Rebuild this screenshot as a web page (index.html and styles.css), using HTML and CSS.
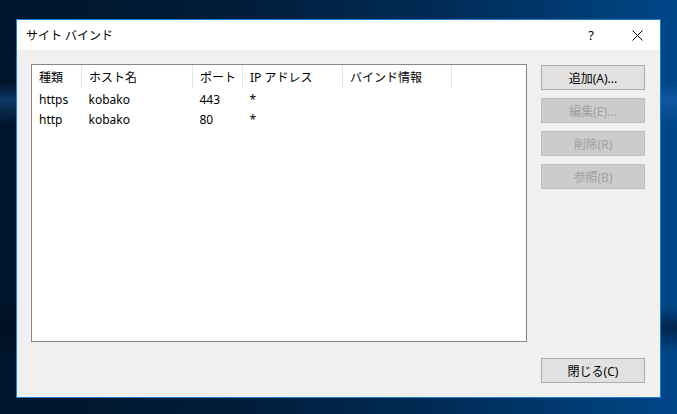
FILE: index.html
```html
<!DOCTYPE html>
<html lang="ja">
<head>
    <meta charset="UTF-8">
    <meta name="viewport" content="width=device-width, initial-scale=1.0">
    <title>サイト バインド</title>
    <link rel="stylesheet" href="styles.css">
</head>
<body>
    <div class="dialog">
        <div class="titlebar">
            <span class="title">サイト バインド</span>
            <div class="caption-buttons">
                <span class="caption-btn help">?</span>
                <span class="caption-btn close">
                    <svg width="11" height="11" viewBox="0 0 11 11">
                        <path d="M0.5 0.5 L10.5 10.5 M10.5 0.5 L0.5 10.5" stroke="#000" stroke-width="1" fill="none"/>
                    </svg>
                </span>
            </div>
        </div>

        <div class="content">
            <div class="listview">
                <table>
                    <thead>
                        <tr>
                            <th class="col-type">種類</th>
                            <th class="col-host">ホスト名</th>
                            <th class="col-port">ポート</th>
                            <th class="col-ip">IP アドレス</th>
                            <th class="col-info">バインド情報</th>
                            <th class="col-rest"></th>
                        </tr>
                    </thead>
                    <tbody>
                        <tr>
                            <td>https</td>
                            <td>kobako</td>
                            <td>443</td>
                            <td>*</td>
                            <td></td>
                            <td></td>
                        </tr>
                        <tr>
                            <td>http</td>
                            <td>kobako</td>
                            <td>80</td>
                            <td>*</td>
                            <td></td>
                            <td></td>
                        </tr>
                    </tbody>
                </table>
            </div>

            <div class="side">
                <button class="btn">追加(A)...</button>
                <button class="btn" disabled>編集(E)...</button>
                <button class="btn" disabled>削除(R)</button>
                <button class="btn" disabled>参照(B)</button>
                <button class="btn btn-close">閉じる(C)</button>
            </div>
        </div>
    </div>
</body>
</html>
```

FILE: styles.css
```css
body {
    margin: 0;
    width: 677px;
    height: 414px;
    overflow: hidden;
    font-family: 'Noto Sans', 'Noto Sans CJK JP', sans-serif;
    font-size: 12px;
    color: #000;
    padding: 19px 0 0 16px;
    box-sizing: border-box;
    background:
        linear-gradient(180deg,
            rgba(0, 0, 0, 0) 0%,
            rgba(0, 0, 0, 0) 20%,
            rgba(40, 120, 210, 0.35) 24%,
            rgba(0, 0, 0, 0) 30%,
            rgba(0, 0, 0, 0) 74%,
            rgba(0, 10, 30, 0.55) 79%,
            rgba(0, 0, 0, 0) 85%),
        linear-gradient(90deg, #00142a 0%, #001d3a 35%, #002b55 65%, #004788 100%);
}

.dialog {
    width: 645px;
    height: 379px;
    border: 1px solid #1a7fd4;
    box-sizing: border-box;
    background: #f0f0f0;
    display: flex;
    flex-direction: column;
}

.titlebar {
    height: 30px;
    background: #fff;
    display: flex;
    align-items: center;
    justify-content: space-between;
    padding-left: 9px;
}

.title {
    font-size: 12px;
    color: #000;
}

.caption-buttons {
    display: flex;
    height: 100%;
}

.caption-btn {
    width: 46px;
    height: 100%;
    display: flex;
    align-items: center;
    justify-content: center;
}

.help {
    font-size: 13px;
}

.content {
    flex: 1;
    display: flex;
    gap: 14px;
    padding: 14px 15px 14px 14px;
}

.listview {
    width: 496px;
    height: 278px;
    box-sizing: border-box;
    border: 1px solid #828790;
    background: #fff;
    overflow: hidden;
}

table {
    border-collapse: collapse;
    width: 100%;
    table-layout: fixed;
}

th {
    height: 24px;
    padding: 0 0 0 7px;
    text-align: left;
    font-weight: normal;
    border-right: 1px solid #e5e5e5;
    white-space: nowrap;
}

th.col-rest {
    border-right: none;
}

td {
    height: 20px;
    padding: 0 0 0 7px;
    white-space: nowrap;
}

.col-type { width: 42px; }
.col-host { width: 103px; }
.col-port { width: 42px; }
.col-ip { width: 92px; }
.col-info { width: 101px; }

.side {
    width: 104px;
    display: flex;
    flex-direction: column;
    gap: 8px;
    padding-top: 1px;
}

.btn {
    height: 25px;
    width: 104px;
    box-sizing: border-box;
    border: 1px solid #adadad;
    background: #e1e1e1;
    font-family: 'Noto Sans', 'Noto Sans CJK JP', sans-serif;
    font-size: 12px;
    color: #000;
    padding: 0;
}

.btn:disabled {
    background: #cccccc;
    border-color: #bfbfbf;
    color: #a0a0a0;
}

.btn-close {
    margin-top: auto;
}
```
